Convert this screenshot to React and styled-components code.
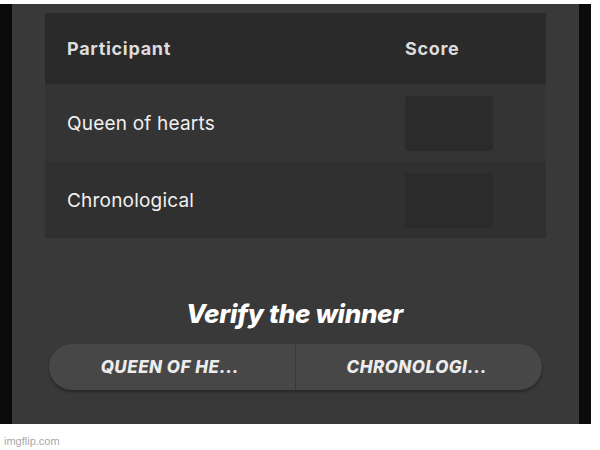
import React from "react"
import styled, { createGlobalStyle } from "styled-components"

const participants = [
  { name: "Queen of hearts", short: "QUEEN OF HE..." },
  { name: "Chronological", short: "CHRONOLOGI..." },
]

const App = () => {
  return (
    <>
      <GlobalStyle />
      <Page>
        <Frame>
          <Panel>
            <Table>
              <HeaderRow>
                <HeadCell>Participant</HeadCell>
                <HeadCell>Score</HeadCell>
              </HeaderRow>
              {participants.map((p, i) => (
                <Row key={p.name} alt={i % 2 === 1}>
                  <NameCell>{p.name}</NameCell>
                  <ScoreBox />
                </Row>
              ))}
            </Table>
            <Title>Verify the winner</Title>
            <ButtonGroup>
              {participants.map((p, i) => (
                <ChoiceButton key={p.name} first={i === 0}>
                  {p.short}
                </ChoiceButton>
              ))}
            </ButtonGroup>
          </Panel>
        </Frame>
        <Watermark>imgflip.com</Watermark>
      </Page>
    </>
  )
}

const GlobalStyle = createGlobalStyle`
  body {
    margin: 0;
    background: #fff;
    font-family: Inter, "Noto Sans", sans-serif;
  }
`
const Page = styled.div`
  width: 600px;
  height: 450px;
  padding-top: 4px;
  box-sizing: border-box;
`
const Frame = styled.div`
  width: 591px;
  height: 420px;
  background: #0b0b0b;
  padding: 0 12px;
  box-sizing: border-box;
`
const Panel = styled.div`
  height: 100%;
  background: #393939;
  padding: 9px 33px 0;
  box-sizing: border-box;
  display: flex;
  flex-direction: column;
`
const Table = styled.div`
  width: 501px;
  display: flex;
  flex-direction: column;
`
const HeaderRow = styled.div`
  height: 71px;
  background: #2a2a2a;
  display: grid;
  grid-template-columns: 338px 1fr;
  align-items: center;
  padding-left: 22px;
  padding-bottom: 1px;
  box-sizing: border-box;
`
const HeadCell = styled.div`
  font-size: 18px;
  font-weight: 700;
  color: #dcdcdc;
  letter-spacing: 0.7px;
`
const Row = styled.div`
  height: ${(props) => (props.alt ? "76px" : "78px")};
  background: ${(props) => (props.alt ? "#303030" : "#343434")};
  display: grid;
  grid-template-columns: 338px 88px;
  align-items: center;
  padding-left: 22px;
  box-sizing: border-box;
`
const NameCell = styled.div`
  font-size: 19px;
  color: #f0f0f0;
  letter-spacing: 0.2px;
`
const ScoreBox = styled.div`
  height: 55px;
  background: #2b2b2b;
  border-radius: 4px;
`
const Title = styled.h2`
  margin: 60px 0 0;
  text-align: center;
  font-size: 26px;
  line-height: 32px;
  font-weight: 800;
  font-style: italic;
  color: #fff;
  letter-spacing: -0.3px;
  padding-left: 0;
  padding-right: 2px;
`
const ButtonGroup = styled.div`
  margin: 14px 0 0 4px;
  width: 493px;
  height: 46px;
  border-radius: 23px;
  background: #474747;
  display: grid;
  grid-template-columns: 1fr 1fr;
  box-shadow: 0 2px 3px rgba(0, 0, 0, 0.35);
  overflow: hidden;
`
const ChoiceButton = styled.div`
  display: flex;
  align-items: center;
  justify-content: center;
  padding-right: 4px;
  font-size: 17px;
  font-weight: 800;
  font-style: italic;
  color: #ececec;
  letter-spacing: 0.5px;
  border-right: ${(props) => (props.first ? "1px solid #3a3a3a" : "none")};
`
const Watermark = styled.div`
  margin: 11px 0 0 4px;
  font-family: "Liberation Sans", Arial, sans-serif;
  font-size: 11px;
  color: #a8a8a8;
`

export default App
